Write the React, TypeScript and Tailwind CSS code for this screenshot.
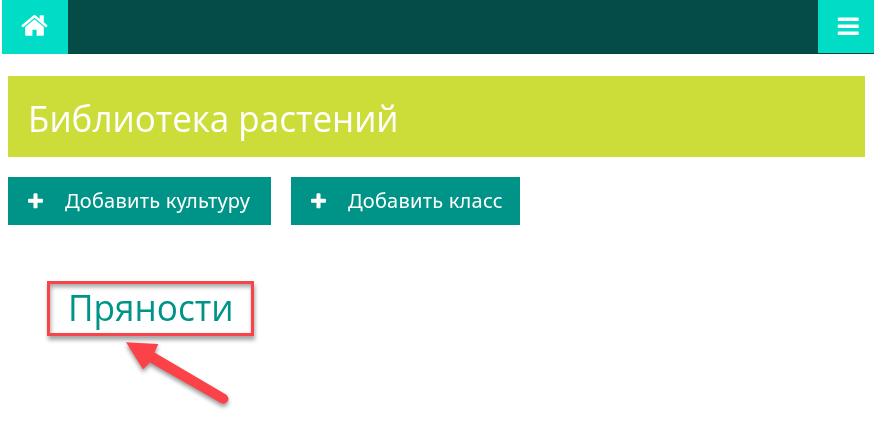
import type { ReactNode } from 'react';

const HOME =
  'M1472 992v480q0 26-19 45t-45 19h-384v-384h-256v384h-384q-26 0-45-19t-19-45v-480q0-1 .5-3t.5-3l575-474 575 474q1 2 1 6zm223-69l-62 74q-8 9-21 11h-3q-13 0-21-7l-692-577-692 577q-12 8-24 7-13-2-21-11l-62-74q-8-10-7-23.5t11-21.5l719-599q32-26 76-26t76 26l244 204v-195q0-14 9-23t23-9h192q14 0 23 9t9 23v408l219 182q10 8 11 21.5t-7 23.5z';
const BARS =
  'M1664 1344v128q0 26-19 45t-45 19h-1408q-26 0-45-19t-19-45v-128q0-26 19-45t45-19h1408q26 0 45 19t19 45zm0-512v128q0 26-19 45t-45 19h-1408q-26 0-45-19t-19-45v-128q0-26 19-45t45-19h1408q26 0 45 19t19 45zm0-512v128q0 26-19 45t-45 19h-1408q-26 0-45-19t-19-45v-128q0-26 19-45t45-19h1408q26 0 45 19t19 45z';
const PLUS =
  'M1600 736v192q0 40-28 68t-68 28h-416v416q0 40-28 68t-68 28h-192q-40 0-68-28t-28-68v-416h-416q-40 0-68-28t-28-68v-192q0-40 28-68t68-28h416v-416q0-40 28-68t68-28h192q40 0 68 28t28 68v416h416q40 0 68 28t28 68z';

function Icon({ path, className }: { path: string; className: string }) {
  return (
    <svg viewBox="0 0 1792 1792" fill="currentColor" className={className} aria-hidden="true">
      <path d={path} />
    </svg>
  );
}

function ActionButton({ className, children }: { className: string; children: ReactNode }) {
  return (
    <button className={`flex h-12 items-center bg-[#009488] pl-[18px] text-white ${className}`}>
      <Icon path={PLUS} className="size-[19px] shrink-0" />
      <span className="ml-5 origin-left scale-x-[1.055] whitespace-nowrap font-['Noto_Sans',sans-serif] text-[19px] font-[450] leading-6 tracking-[0.2px]">
        {children}
      </span>
    </button>
  );
}

export default function App() {
  return (
    <div className="h-[445px] overflow-hidden bg-white font-['Open_Sans',sans-serif]">
      <header className="ml-0.5 flex h-[54px] justify-between border-b border-[#034539] bg-[#054b47] text-white">
        <button aria-label="Домой" className="h-[54px] w-[66px] shrink-0 bg-[#00dcc5] pl-[18px]">
          <Icon path={HOME} className="-mt-1 size-[29px]" />
        </button>
        <button aria-label="Меню" className="h-[53px] w-14 shrink-0 bg-[#00dcc5] pl-[17.5px]">
          <Icon path={BARS} className="size-[24.5px]" />
        </button>
      </header>

      <main className="pl-2 pr-[9px] pt-[22px]">
        <h1 className="flex h-[81px] items-center bg-[#ccdd39] pl-5 pt-0.5 text-[37px] leading-none text-white">
          <span className="origin-left scale-x-[0.945]">Библиотека растений</span>
        </h1>

        <div className="mt-5 flex gap-5">
          <ActionButton className="w-[263px]">Добавить культуру</ActionButton>
          <ActionButton className="w-[229px]">Добавить класс</ActionButton>
        </div>

        <section className="relative ml-[39px] mt-14 w-[207px]">
          <h2 className="flex h-[55px] items-center border-[3px] border-[#f94349] pb-1 pl-[18px] text-[37px] leading-none text-[#009488] shadow-[1px_4px_4px_rgba(0,0,0,0.35),inset_1px_3px_4px_rgba(0,0,0,0.35)]">
            <span className="origin-left scale-x-[0.95]">Пряности</span>
          </h2>
          <svg
            viewBox="0 0 120 80"
            className="absolute left-[73px] top-[55px] h-20 w-[120px] drop-shadow-[0px_3px_2px_rgba(0,0,0,0.4)]"
            aria-hidden="true"
          >
            <path
              d="M6 6.300 L38.300 8 L34.500 16.500 L106 58.500 Q109.500 61 108 65 Q105 69 101 67 L30 26.500 L23 33.300 Z"
              fill="#fb4248"
            />
          </svg>
        </section>
      </main>
    </div>
  );
}
